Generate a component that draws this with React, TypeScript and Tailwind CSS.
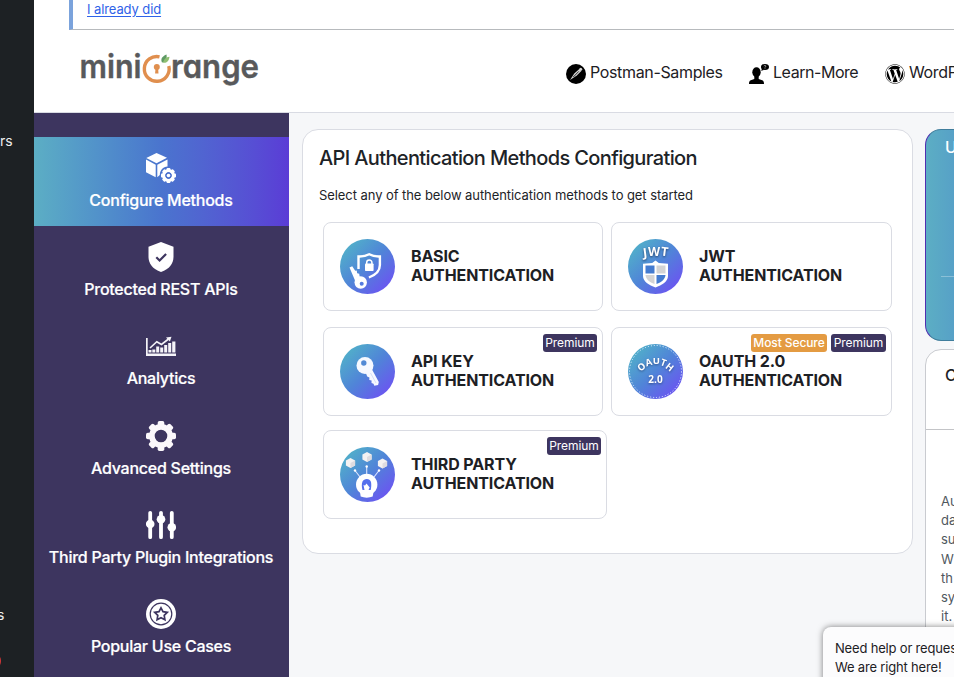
import type { ReactNode } from "react";
import { FaWordpress } from "react-icons/fa";

function Logo() {
  return (
    <svg width="184" height="46" viewBox="-2 -2 184 46" className="block overflow-visible">
      <g fill="#58595b" stroke="#58595b" strokeWidth=".4" fontFamily="Inter, sans-serif" fontWeight="600" fontSize="33" style={{ fontFeatureSettings: "'cv11'" }}>
        <text x="-1.500" y="28" textLength="62" lengthAdjust="spacingAndGlyphs">mini</text>
        <text x="90" y="28" textLength="88" lengthAdjust="spacingAndGlyphs">range</text>
      </g>
      <path d="M78.500 6.800A12.400 12.400 0 1 0 87.800 16" fill="none" stroke="#e08f4e" strokeWidth="3.400" />
      <circle cx="75.800" cy="17" r="3" fill="#e08f4e" />
      <path d="M74.600 17h2.400l.5 6.600h-3.400z" fill="#e08f4e" />
      <path d="M81 12.500c-2-4 1-6.500 4.500-8 .7 4-.5 7.500-4.500 8z" fill="#5e9a64" />
      <path d="M82 12.700c1-4 3-5.500 6.500-6-.5 4-2.500 6.500-6.500 6z" fill="#8fbf72" />
    </svg>
  );
}

function PostmanIcon() {
  return (
    <svg width="20" height="20" viewBox="0 0 20 20">
      <circle cx="10" cy="10" r="10" fill="#000" />
      <path d="M4 16l4.300-6.500 5-4.600 2 2-4.500 4.600z" fill="#d6d6d6" />
      <path d="M7.300 13l5.500-5.600" stroke="#000" strokeWidth=".8" />
      <circle cx="14.700" cy="5.300" r="1.500" fill="#d6d6d6" />
    </svg>
  );
}

function LearnIcon() {
  return (
    <svg width="20" height="20" viewBox="0 0 20 20">
      <ellipse cx="7.500" cy="8.300" rx="4.200" ry="5" fill="#000" />
      <path d="M5.300 12h4.400v3l3.500 1.200c1.500.6 1.800 2 1.800 3.800H0c0-1.800.3-3.200 1.800-3.800L5.300 15z" fill="#000" />
      <ellipse cx="16" cy="3" rx="4" ry="3" fill="#000" />
      <path d="M13 4.500l-.8 2.500 3-1.300z" fill="#000" />
      <path d="M15 2.200c.2-1.200 2-1 1.800.1-.1.600-.8.500-.8 1.300M16 4.300v.6" stroke="#ddd" strokeWidth=".7" fill="none" />
    </svg>
  );
}

const gearTeeth = [0, 45, 90, 135, 180, 225, 270, 315];

function CubeGearIcon() {
  return (
    <svg width="30" height="30" viewBox="0 0 30 30" fill="#fff">
      <path d="M10.500 0L21 4.700 10.500 10.300.3 4.900z" />
      <path d="M0 6.400l9.700 5.300v12.500L0 19.200z" />
      <path d="M21.500 6.400v7.100c-4.400.4-7.600 3.600-7.700 8.500L11.300 24.200V11.700z" />
      <g transform="translate(22.500 22.500)">
        {gearTeeth.map((a) => <rect key={a} x="-1.900" y="-7.500" width="3.800" height="4" rx=".9" transform={`rotate(${a})`} />)}
        <circle r="4.900" fill="none" stroke="#fff" strokeWidth="3" />
        <circle r="1.800" />
      </g>
    </svg>
  );
}

function ShieldIcon() {
  return (
    <svg width="30" height="30" viewBox="0 0 30 30">
      <path d="M15 0l12.500 4.700v10C27.500 21.500 23.500 27 15 30 6.500 27 2.500 21.500 2.500 14.700v-10z" fill="#fff" />
      <path d="M10.300 15.300l3.300 3.200 6.500-6.500" stroke="#3d355f" strokeWidth="2.200" fill="none" />
    </svg>
  );
}

function AnalyticsIcon() {
  return (
    <svg width="30" height="30" viewBox="0 0 30 30" fill="#f5f4f8">
      <path d="M0 7h1.700v15.500H30V25H0z" />
      <path d="M2.500 19h3v2.500h-3zM6.300 18.500h3v3h-3zM10.200 15.500h3v6h-3zM14.200 16.500h3v5h-3zM18.200 14h3v7.500h-3zM22.200 12h3v9.500h-3zM26.200 10.500h3.200v11h-3.200z" />
      <path d="M4 17l6.800-6.300 4.700 2.800 7-5.500" fill="none" stroke="#f5f4f8" strokeWidth="1.600" />
      <path d="M20 6.500l5.500-.7-1.600 4.800z" />
    </svg>
  );
}

function GearIcon() {
  return (
    <svg width="30" height="30" viewBox="-15 -15 30 30" fill="#fbf8fb">
      {gearTeeth.map((a) => <rect key={a} x="-3.300" y="-15" width="6.600" height="8" rx="1.800" transform={`rotate(${a})`} />)}
      <circle r="9.100" fill="none" stroke="#fbf8fb" strokeWidth="5.600" />
    </svg>
  );
}

function SlidersIcon() {
  return (
    <svg width="30" height="30" viewBox="0 0 30 30" fill="#fff">
      <path d="M4.200 2.800v24.400M15 2.800v24.400M25.800 2.800v24.400" stroke="#fff" strokeWidth="3.800" strokeLinecap="round" />
      <circle cx="4.200" cy="14" r="4.300" />
      <circle cx="15" cy="9.300" r="4.300" />
      <circle cx="25.800" cy="17.300" r="4.300" />
    </svg>
  );
}

function StarIcon() {
  return (
    <svg width="30" height="30" viewBox="0 0 30 30">
      <circle cx="15" cy="15" r="15" fill="#fff" />
      <circle cx="15" cy="15" r="10.800" fill="none" stroke="#3d355f" strokeWidth="1.200" />
      <path d="M15 8.800l2 3.900 4.300.6-3.100 3.100.7 4.300-3.900-2-3.900 2 .7-4.300-3.100-3.100 4.300-.6z" fill="#fff" stroke="#3d355f" strokeWidth="1.700" />
    </svg>
  );
}

function Badge({ id, children }: { id: string; children: ReactNode }) {
  return (
    <svg width="55" height="55" viewBox="0 0 55 55" className="shrink-0">
      <defs>
        <linearGradient id={id} x1=".1" y1=".1" x2=".9" y2=".9">
          <stop offset="0" stopColor="#51b1c9" />
          <stop offset=".5" stopColor="#5084d8" />
          <stop offset="1" stopColor="#6c53f2" />
        </linearGradient>
      </defs>
      <circle cx="27.500" cy="27.500" r="27.500" fill={`url(#${id})`} />
      {children}
    </svg>
  );
}

function BasicBadge() {
  return (
    <Badge id="basic">
      <path d="M18.500 30V17.500c4.500.2 8-.7 10.700-2.200 2.700 1.500 6.200 2.400 10.700 2.200V26c0 6-4.400 10-11 12.500" fill="none" stroke="#fff" strokeWidth="2.400" />
      <rect x="25" y="24.500" width="8.600" height="7.500" rx=".8" fill="#fff" />
      <path d="M26.700 25v-1.500a2.600 2.600 0 0 1 5.200 0V25" fill="none" stroke="#fff" strokeWidth="1.500" />
      <g fill="#fff">
        <circle cx="20.700" cy="43.500" r="6.200" />
        <path d="M9.500 28.500l2.700-1.300 3 4.500 1.500-.3.500 2.800 2 .5.500 3 5 2.500-8.500 4z" />
      </g>
      <circle cx="21.700" cy="44.800" r="2" fill="#547be0" />
    </Badge>
  );
}

function JwtBadge() {
  return (
    <Badge id="jwt">
      <g fill="#fff" fontFamily="'Open Sans', sans-serif" fontWeight="700" fontSize="12.500" textAnchor="middle" style={{ filter: "drop-shadow(0 1px 1px #27406c)" }}>
        <text transform="translate(17.500 18) rotate(-7)">J</text>
        <text x="26" y="17">W</text>
        <text transform="translate(36 17) rotate(7)">T</text>
      </g>
      <path d="M27.500 21.500l3.300 2.500 9.200.8V37c0 5.500-6 9-12.500 11.500C21 46 15 42.500 15 37V24.800l9.200-.8z" fill="#fff" />
      <path d="M17.500 26.500h9v8h-9z" fill="#447bd0" />
      <path d="M28.500 26.500h9v8h-9zM17.500 36h9v9c-5-2-8.500-4.500-9-9z" fill="#d3d3d5" />
      <path d="M28.500 36h9c-.5 4.500-4 7-9 9z" fill="#447bd0" />
    </Badge>
  );
}

function KeyBadge() {
  return (
    <Badge id="key">
      <circle cx="25" cy="21.500" r="8.500" fill="#f6f8ff" />
      <circle cx="23.800" cy="19" r="2.700" fill="#5289d5" />
      <path d="M25.500 28l6-3.500 7.300 13.500-.7 3-3.800.8-.8-2-2-.7.100-2.500-2.300-.7.100-2.300-2.200-1z" fill="#f6f8ff" />
      <path d="M30.500 29l5.500 10" stroke="#cbd5f6" strokeWidth=".8" />
    </Badge>
  );
}

function OauthBadge() {
  return (
    <Badge id="oauth">
      <circle cx="27.500" cy="27.500" r="26" fill="none" stroke="#e4f1ff" strokeWidth="1" strokeDasharray="1.100 1.900" />
      <g fill="#fff" fontFamily="'Open Sans', sans-serif" fontWeight="700" fontSize="9.500" textAnchor="middle" style={{ filter: "drop-shadow(0 1px 1px #31508d)" }}>
        <text transform="translate(15.500 25.500) rotate(-38)">O</text>
        <text transform="translate(21.500 21.500) rotate(-18)">A</text>
        <text transform="translate(28.300 20)">U</text>
        <text transform="translate(34.300 21.800) rotate(20)">T</text>
        <text transform="translate(39.500 25.800) rotate(38)">H</text>
        <text x="27.500" y="38.500" fontSize="10">2.0</text>
      </g>
    </Badge>
  );
}

function Hex({ x, y }: { x: number; y: number }) {
  return (
    <g transform={`translate(${x} ${y})`}>
      <path d="M0-5l4.600 2.500v5L0 5l-4.600-2.500v-5z" fill="#f4f2f2" />
      <path d="M0 0l4.600-2.500v5L0 5z" fill="#dedce0" />
    </g>
  );
}

function ThirdPartyBadge() {
  return (
    <Badge id="third">
      <path d="M20 30l-5-6.500M26.700 28V19.500M34 30l5-6.500" stroke="#dce5ff" strokeWidth="1.100" />
      <g fill="#fff">
        <circle cx="15" cy="23.500" r="1.200" /><circle cx="26.700" cy="19.500" r="1.200" /><circle cx="39" cy="23.500" r="1.200" />
        <circle cx="26.700" cy="37.500" r="10.700" />
        <path d="M20 45h13.500l-.8 4.500c-3.500 1.500-8.500 1.500-12 0z" />
      </g>
      <path d="M22.500 43c-.8-3-1-6 0-8.500 1.500-3.500 7.500-3.500 8.500.5.500 2.500.3 5.500-.3 8h-2.200l1.200-2.500-3.200-4-1.500 2-1.500-.5 1 5z" fill="#5570ed" />
      <Hex x={10.500} y={16} /><Hex x={27} y={10} /><Hex x={42.500} y={16.500} />
    </Badge>
  );
}

const navItems = [
  { label: "Configure Methods", icon: <CubeGearIcon /> },
  { label: "Protected REST APIs", icon: <ShieldIcon /> },
  { label: "Analytics", icon: <AnalyticsIcon /> },
  { label: "Advanced Settings", icon: <GearIcon /> },
  { label: "Third Party Plugin Integrations", icon: <SlidersIcon /> },
  { label: "Popular Use Cases", icon: <StarIcon /> },
];

function Tag({ children, size, orange = false }: { children: ReactNode; size: string; orange?: boolean }) {
  return (
    <span className={`flex h-[18px] items-center justify-center whitespace-nowrap rounded-[3px] text-[12px] leading-[18px] text-white ${size} ${orange ? "bg-[#e49b42] font-medium tracking-[-0.1px]" : "bg-[#3d355f] tracking-[-0.05px]"}`}>
      {children}
    </span>
  );
}

function MethodCard({ icon, title, size, tags }: { icon: ReactNode; title: string; size: string; tags?: ReactNode }) {
  return (
    <div className={`relative flex h-[89px] items-center rounded-lg border border-[#dadce3] bg-white pl-4 ${size}`}>
      {icon}
      <div className="mb-[2px] ml-4 text-[16px] font-bold leading-[19px] tracking-[-0.11px] text-[#1d2024]">
        {title}<br />AUTHENTICATION
      </div>
      {tags && <div className="absolute right-[5px] top-[6px] flex gap-1">{tags}</div>}
    </div>
  );
}

export default function App() {
  return (
    <div className="relative flex h-[677px] w-[954px] overflow-hidden bg-white font-['Inter','Liberation_Sans',sans-serif] text-[#1d2327]">
      <aside className="flex w-[34px] shrink-0 flex-col overflow-hidden bg-[#1d2124] text-[14px] leading-5 text-[#eeeff0]">
        <span className="mt-[131px]">rs</span>
        <span className="-ml-[3px] mt-[454px]">s</span>
        <span className="-ml-[17px] mt-[27px] h-[18px] w-[18px] rounded-full bg-[#d63638]" />
      </aside>
      <div className="flex w-[920px] shrink-0 flex-col">
        <div className="ml-[35px] h-[30px] shrink-0 border-b border-l-4 border-b-[#b7babd] border-l-[#7ba3dc] pl-[14px]">
          <a className="block text-[13px] leading-[19px] tracking-[-0.1px] text-[#2f62e8] underline underline-offset-2">I already did</a>
        </div>
        <header className="flex h-[83px] shrink-0 items-start border-b border-[#d9dbe3] text-[16px] leading-6 text-[#1d2024]">
          <div className="ml-[45px] mt-[18px] w-[184px]"><Logo /></div>
          <nav className="ml-[303px] mt-[30px] flex whitespace-nowrap tracking-[-0.35px]">
            <div className="flex w-[183px]"><span className="mr-1 mt-1"><PostmanIcon /></span><span>Postman-Samples</span></div>
            <div className="flex w-[136px]"><span className="mr-1 mt-1"><LearnIcon /></span><span className="tracking-[-0.45px]">Learn-More</span></div>
            <div className="flex"><span className="mr-1 mt-1"><FaWordpress size={20} color="#000" /></span><span>WordPress</span></div>
          </nav>
        </header>
        <div className="flex h-[564px] shrink-0">
          <nav className="flex w-[255px] shrink-0 flex-col bg-[#3d355f] pt-6">
            {navItems.map((item, i) => (
              <div key={item.label} className={`flex h-[89.2px] shrink-0 flex-col items-center pr-px pt-4 text-white ${i === 0 ? "bg-linear-to-r from-[#5caec4] via-[#4a74ce] to-[#5a3cd6]" : ""}`}>
                <div className="h-[30px] w-[30px]">{item.icon}</div>
                <span className="mt-[5px] whitespace-nowrap text-[16px] font-medium leading-6 tracking-[-0.25px] [-webkit-text-stroke:0.2px_white]">{item.label}</span>
              </div>
            ))}
          </nav>
          <main className="flex w-[665px] shrink-0 bg-[#f6f7f9] pl-[13px] pt-4">
            <section className="h-[425px] w-[611px] shrink-0 rounded-2xl border border-[#dadce3] bg-white pl-4 pt-4">
              <h1 className="text-[20px] font-medium leading-6 tracking-[-0.63px]">API Authentication Methods Configuration</h1>
              <p className="mt-[15px] text-[13px] leading-5 tracking-[-0.07px]">Select any of the below authentication methods to get started</p>
              <div className="ml-1 mt-[17px] flex flex-col">
                <div className="flex gap-2">
                  <MethodCard icon={<BasicBadge />} title="BASIC" size="w-[280px]" />
                  <MethodCard icon={<JwtBadge />} title="JWT" size="w-[281px]" />
                </div>
                <div className="mt-4 flex gap-2">
                  <MethodCard icon={<KeyBadge />} title="API KEY" size="w-[280px]" tags={<Tag size="w-[54px]">Premium</Tag>} />
                  <MethodCard icon={<OauthBadge />} title="OAUTH 2.0" size="w-[281px]" tags={<><Tag orange size="w-[76px]">Most Secure</Tag><Tag size="w-[55px]">Premium</Tag></>} />
                </div>
                <div className="mt-[14px] flex">
                  <MethodCard icon={<ThirdPartyBadge />} title="THIRD PARTY" size="w-[284px]" tags={<Tag size="w-[54px]">Premium</Tag>} />
                </div>
              </div>
            </section>
            <div className="ml-3 flex w-[300px] shrink-0 flex-col">
              <section className="h-[212px] shrink-0 rounded-2xl border border-[#3f7d9c] border-l-[#512eb0] bg-linear-to-r from-[#5caec4] from-0% via-[#4a74ce] via-40% to-[#5a3cd6] pl-[15px] pt-[6px] text-white">
                <div className="h-[141px] border-b border-white/30 pl-1 text-[16px] font-medium leading-[23px]">Upgrade</div>
              </section>
              <section className="mt-2 h-[400px] shrink-0 rounded-2xl border border-[#c9cbd0] bg-white">
                <div className="h-[80px] border-b border-[#c3c4c7] pl-[19px] pt-[13px] text-[16px] font-medium leading-6">Contact</div>
                <p className="pl-[15px] pt-[62px] text-[13px] leading-[19.200px] text-[#50575e]">Au<br />da<br />su<br />W<br />th<br />sy<br />it.</p>
              </section>
            </div>
          </main>
        </div>
      </div>
      <div className="absolute left-[823px] top-[627px] h-[70px] w-[200px] whitespace-nowrap rounded-lg bg-[#fcfcfd] pl-3 pt-3 text-[13px] leading-[19px] tracking-[-0.18px] text-[#1d2024] shadow-[0_0_6px_rgba(0,0,0,0.5)]">
        Need help or request<br />We are right here!
      </div>
    </div>
  );
}
